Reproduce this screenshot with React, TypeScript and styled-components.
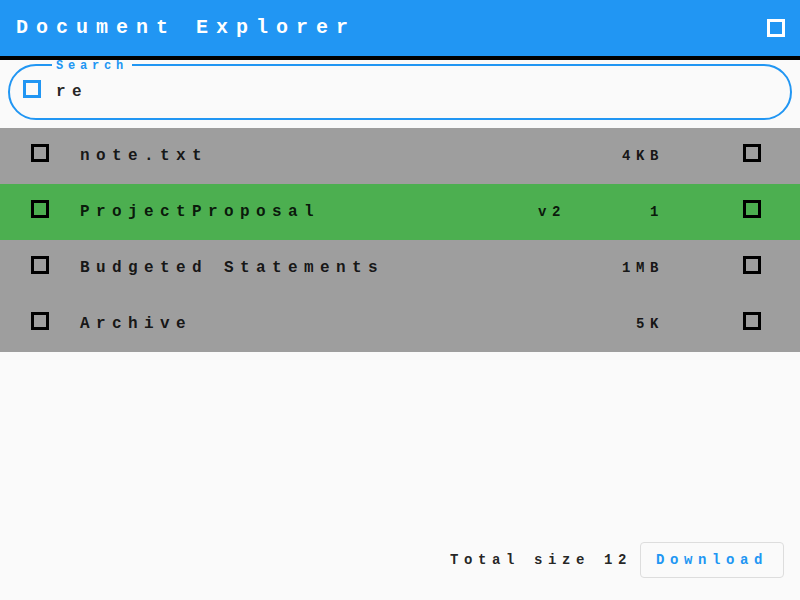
import React from "react";
import styled, { createGlobalStyle, css } from "styled-components";

const GlobalStyle = createGlobalStyle`
  html, body {
    margin: 0;
    padding: 0;
    background: #fafafa;
    font-family: "Liberation Mono", "DejaVu Sans Mono", monospace;
  }
`;

// every glyph takes one em, like the wide monospace look of the screen
const wide = css`
  font-family: "Liberation Mono", "DejaVu Sans Mono", monospace;
  font-weight: 700;
  letter-spacing: 0.4em;
`;

const Page = styled.div`
  min-height: 100vh;
  display: flex;
  flex-direction: column;
`;

const AppBar = styled.header`
  height: 56px;
  background: #2196f3;
  border-bottom: 4px solid #000;
  display: flex;
  align-items: center;
  padding: 0 15px 0 16px;
`;

const Title = styled.h1`
  flex: 1;
  margin: 0;
  font-size: 20px;
  line-height: 20px;
  color: #fff;
  ${wide}
`;

const IconButton = styled.button`
  border: 0;
  padding: 0;
  background: none;
  display: flex;
  color: #fff;
`;

const SearchWrap = styled.div`
  padding: 4px 8px 8px;
`;

const Field = styled.label`
  position: relative;
  height: 56px;
  box-sizing: border-box;
  border: 2px solid #2196f3;
  border-radius: 28px;
  display: flex;
  align-items: center;
  padding-left: 13px;
  gap: 15px;
  color: #2196f3;
`;

const FieldLabel = styled.span`
  position: absolute;
  top: -6px;
  left: 42px;
  padding: 0 4px;
  background: #fafafa;
  font-size: 12px;
  line-height: 12px;
  color: #2196f3;
  ${wide}
`;

const SearchInput = styled.input`
  flex: 1;
  border: 0;
  outline: none;
  background: transparent;
  font-size: 16px;
  color: rgba(0, 0, 0, 0.87);
  caret-color: #2196f3;
  padding: 0;
  ${wide}
`;

const List = styled.ul`
  list-style: none;
  margin: 0;
  padding: 0;
`;

const Row = styled.li<{ $selected?: boolean }>`
  height: 56px;
  display: flex;
  align-items: center;
  padding: 0 39px 0 31px;
  background: ${(p) => (p.$selected ? "#4caf50" : "#9e9e9e")};
  color: rgba(0, 0, 0, 0.87);
`;

const Name = styled.span`
  flex: 1;
  margin-left: 31px;
  font-size: 16px;
  ${wide}
`;

const Meta = styled.span<{ $width: number }>`
  width: ${(p) => p.$width}px;
  text-align: right;
  font-size: 14px;
  ${wide}
`;

const Box = styled.svg<{ $up?: boolean }>`
  flex-shrink: 0;
  margin-bottom: ${(p) => (p.$up ? 6 : 0)}px;
`;

const RowIcon = styled.span<{ $right?: boolean }>`
  display: flex;
  color: #000;
  margin-left: ${(p) => (p.$right ? 79 : 0)}px;
`;

const Footer = styled.footer`
  margin-top: auto;
  display: flex;
  justify-content: flex-end;
  align-items: center;
  padding: 0 16px 22px;
  font-size: 14px;
  color: rgba(0, 0, 0, 0.87);
  ${wide}
`;

const Count = styled.span`
  margin-left: 14px;
  margin-right: 8px;
`;

const Button = styled.button`
  height: 36px;
  padding: 0 15px;
  border: 1px solid #ddd;
  border-radius: 4px;
  background: #fafafa;
  color: #2196f3;
  font-size: 14px;
  ${wide}
`;

const Square = ({ up = true }: { up?: boolean }) => (
  <Box $up={up} width="18" height="18" viewBox="0 0 18 18">
    <rect x="1.5" y="1.5" width="15" height="15" fill="none" stroke="currentColor" strokeWidth="3" />
  </Box>
);

const files = [
  { name: "note.txt", type: "", size: "4KB" },
  { name: "ProjectProposal", type: "v2", size: "1", selected: true },
  { name: "Budgeted Statements", type: "", size: "1MB" },
  { name: "Archive", type: "", size: "5K" },
];

export default function App() {
  return (
    <Page>
      <GlobalStyle />
      <AppBar>
        <Title>Document Explorer</Title>
        <IconButton aria-label="select all">
          <Square up={false} />
        </IconButton>
      </AppBar>
      <SearchWrap>
        <Field>
          <FieldLabel>Search</FieldLabel>
          <Square />
          <SearchInput defaultValue="re" autoFocus />
        </Field>
      </SearchWrap>
      <List>
        {files.map((f) => (
          <Row key={f.name} $selected={f.selected}>
            <RowIcon>
              <Square />
            </RowIcon>
            <Name>{f.name}</Name>
            <Meta $width={100}>{f.type}</Meta>
            <Meta $width={98}>{f.size}</Meta>
            <RowIcon $right>
              <Square />
            </RowIcon>
          </Row>
        ))}
      </List>
      <Footer>
        <span>Total size</span>
        <Count>12</Count>
        <Button>Download</Button>
      </Footer>
    </Page>
  );
}
